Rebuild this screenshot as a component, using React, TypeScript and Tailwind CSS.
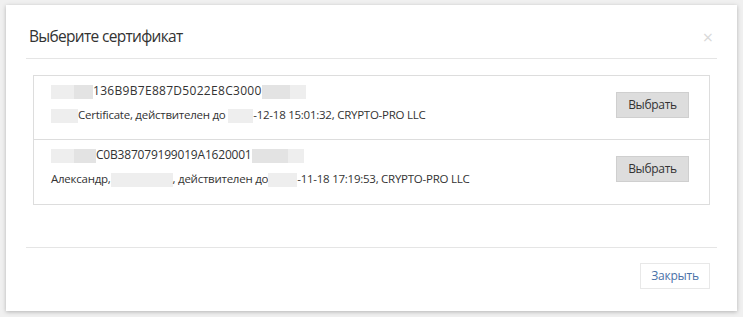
import React from 'react';

const Blur: React.FC<{ w: number; tone?: 'light' | 'mid' }> = ({ w, tone = 'light' }) => (
    <span
        className={`inline-block h-[14px] align-middle ${tone === 'mid' ? 'bg-[#e3e3e3]' : 'bg-[#eeeeee]'}`}
        style={{ width: w }}
    />
);

const CertRow: React.FC<{ first: React.ReactNode; second: React.ReactNode; firstClass?: string; last?: boolean }> = ({ first, second, firstClass, last }) => (
    <div className={`flex justify-between h-[64px] ${last ? '' : 'border-b border-[#dddddd]'}`}>
        <div className="pl-[17px] pt-[6px] text-[12px] text-[#333333]">
            <div className={`leading-[18px] whitespace-nowrap ${firstClass ?? ''}`}>{first}</div>
            <div className="leading-[18px] mt-[6px] whitespace-nowrap text-[11.5px] tracking-[-0.25px]">{second}</div>
        </div>
        <button className="self-start mt-[16px] mr-[20px] w-[73px] h-[26px] bg-[#dddddd] border border-[#cfcfcf] text-[12px] tracking-[-0.3px] text-[#333333]">
            Выбрать
        </button>
    </div>
);

export default function App() {
    return (
        <div className="min-h-screen bg-[#f0f0f0] pt-[5px] pl-[6px]" style={{ fontFamily: '"Open Sans", "Liberation Sans", sans-serif' }}>
            <div className="w-[731px] h-[306px] bg-white shadow-[0_1px_4px_rgba(0,0,0,0.25)] flex flex-col">
                {/* header */}
                <div className="mx-[20px] pt-[20px] pb-[11px] border-b border-[#e5e5e5] flex items-center justify-between">
                    <h3 className="pl-[3px] text-[15.5px] tracking-[-0.7px] leading-[22px] text-[#333333]">Выберите сертификат</h3>
                    <span className="mr-[4px] mt-[2px] text-[18px] leading-[18px] text-[#d9d9d9]">×</span>
                </div>

                {/* body */}
                <div className="flex-1 px-[27px] pt-[16px]">
                    <div className="border border-[#dddddd]">
                        <CertRow
                            firstClass="tracking-[0.3px]"
                            first={<><Blur w={23} /><Blur w={19} tone="mid" />136B9B7E887D5022E8C3000<Blur w={28} tone="mid" /><Blur w={16} /></>}
                            second={<><Blur w={27} />Certificate, действителен до <Blur w={25} />-12-18 15:01:32, CRYPTO-PRO LLC</>}
                        />
                        <CertRow
                            last
                            firstClass="tracking-[-0.2px]"
                            first={<><Blur w={23} /><Blur w={22} tone="mid" />C0B387079199019A1620001<Blur w={36} tone="mid" /><Blur w={16} /></>}
                            second={<>Александр,<Blur w={62} />, действителен до<Blur w={29} />-11-18 17:19:53, CRYPTO-PRO LLC</>}
                        />
                    </div>
                </div>

                {/* footer */}
                <div className="mx-[20px] pt-[15px] pb-[22px] border-t border-[#e5e5e5] flex justify-end">
                    <button className="mr-[7px] w-[70px] h-[26px] bg-white border border-[#e8e8e8] text-[12px] tracking-[-0.2px] text-[#4a72a8]">
                        Закрыть
                    </button>
                </div>
            </div>
        </div>
    );
}
